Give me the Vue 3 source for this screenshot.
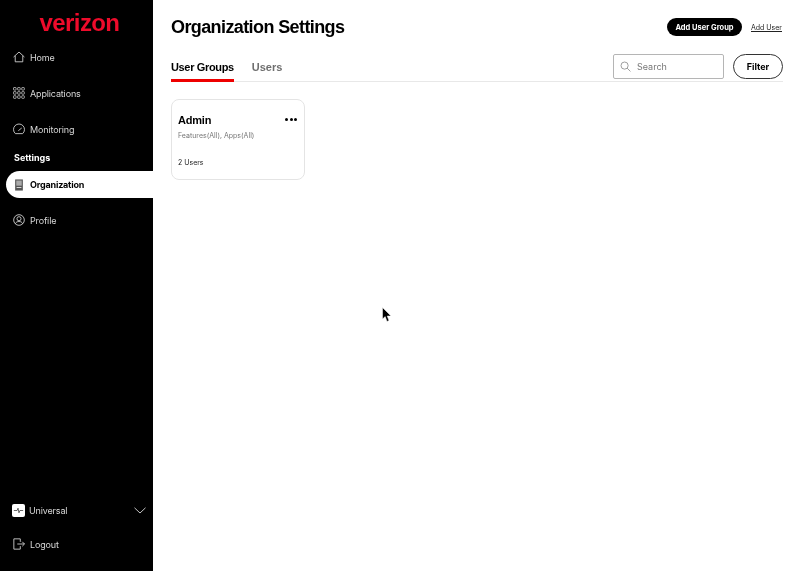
<script setup>
const topNav = [
  { label: 'Home', icon: 'home' },
  { label: 'Applications', icon: 'apps' },
  { label: 'Monitoring', icon: 'gauge' },
]
const dots = [0, 1, 2]
</script>

<template>
  <div class="page">
    <aside class="sidebar">
      <div class="logo">verizon</div>
      <nav class="nav">
        <a v-for="item in topNav" :key="item.label" class="nav-item">
          <svg class="icon" viewBox="0 0 14 14" fill="none" stroke="currentColor" stroke-width="1">
            <path v-if="item.icon === 'home'" d="M.7 7 7 1.2 13.3 7M2.6 5.6V12.6H11.4V5.6" />
            <g v-else-if="item.icon === 'apps'" stroke-width="0.85">
              <template v-for="r in dots" :key="r">
                <rect v-for="c in dots" :key="c" :x="0.6 + c * 4.8" :y="0.6 + r * 4.8" width="3" height="3" rx="0.6" />
              </template>
            </g>
            <g v-else>
              <path d="M2.8 12.4H11.2A6.4 6.4 0 1 0 2.8 12.4Z" stroke-linejoin="round" />
              <path d="M6.2 9 10.2 5.8" />
            </g>
          </svg>
          <span>{{ item.label }}</span>
        </a>
        <div class="section">Settings</div>
        <a class="nav-item active">
          <svg class="icon" viewBox="0 0 14 14">
            <path d="M2.5 .5H11.5V13.5H2.5Z" fill="#555" />
            <path d="M3.8 1.8H10.2V7.8H3.8Z" fill="#aaa" />
            <path d="M4.2 9.5H9.8V10.5H4.2Z" fill="#eee" />
          </svg>
          <span>Organization</span>
        </a>
        <a class="nav-item">
          <svg class="icon" viewBox="0 0 14 14" fill="none" stroke="currentColor" stroke-width="1">
            <circle cx="7" cy="7" r="6.2" />
            <circle cx="7" cy="5.5" r="2.4" />
            <path d="M2.8 11.4C3.4 9.4 5 8.8 7 8.8S10.6 9.4 11.2 11.4" />
          </svg>
          <span>Profile</span>
        </a>
      </nav>
      <div class="bottom">
        <a class="nav-item">
          <span class="tenant">
            <svg viewBox="0 0 14 14" fill="none" stroke="#333" stroke-width="0.8">
              <path d="M2 7H5.5L6.5 4.5 7.5 9.5 8.5 7H12" />
            </svg>
          </span>
          <span class="grow">Universal</span>
          <svg class="chev" viewBox="0 0 12 7" fill="none" stroke="currentColor" stroke-width="0.9">
            <path d="M.5.8 6 6 11.5.8" />
          </svg>
        </a>
        <a class="nav-item">
          <svg class="icon" viewBox="0 0 14 14" fill="none" stroke="currentColor" stroke-width="1">
            <path d="M8.5 4.5V1H1V13H8.5V9.5M5 7H13.4M10.8 4.4 13.4 7 10.8 9.6" />
          </svg>
          <span>Logout</span>
        </a>
      </div>
    </aside>

    <main class="main">
      <header class="head">
        <h1>Organization Settings</h1>
        <div class="actions">
          <button class="btn-primary">Add User Group</button>
          <a class="link">Add User</a>
        </div>
      </header>

      <div class="toolbar">
        <div class="tabs">
          <span class="tab on">User Groups</span>
          <span class="tab">Users</span>
        </div>
        <div class="tools">
          <div class="search">
            <svg viewBox="0 0 12 12" fill="none" stroke="#8a8a8a" stroke-width="0.9">
              <circle cx="5" cy="5" r="3.9" />
              <path d="M7.8 7.8 11.4 11.4" />
            </svg>
            <span>Search</span>
          </div>
          <button class="btn-outline">Filter</button>
        </div>
      </div>

      <section class="card">
        <div class="card-top">
          <h2>Admin</h2>
          <div class="more"><i v-for="d in dots" :key="d"></i></div>
        </div>
        <p class="sub">Features(All), Apps(All)</p>
        <p class="count">2 Users</p>
      </section>
    </main>

    <svg class="cursor" viewBox="0 0 10 16">
      <path d="M.5.5V12L3.2 9.6 5 14.5 7 13.6 5.2 9H9Z" fill="#000" stroke="#fff" stroke-width="0.5" />
    </svg>
  </div>
</template>

<style>
html, body { margin: 0; background: #fff; }
</style>

<style scoped>
.page {
  position: relative;
  display: flex;
  width: 800px;
  height: 571px;
  overflow: hidden;
  background: #fff;
  font-family: Inter, "Liberation Sans", sans-serif;
  color: #000;
}
.nav, .bottom, .head, .toolbar, .card {
  will-change: opacity;
}
.sidebar {
  display: flex;
  flex-direction: column;
  flex: 0 0 153px;
  background: #000;
  color: #d8d8d8;
}
.logo {
  height: 39px;
  padding-left: 6px;
  text-align: center;
  font-family: "Liberation Sans", sans-serif;
  font-size: 24px;
  line-height: 46px;
  font-weight: 700;
  letter-spacing: -0.6px;
  background: linear-gradient(90deg, #ee0b2b 6%, #f7941d 12%, #ee0b2b 17%);
  background-size: 153px 100%;
  -webkit-background-clip: text;
  background-clip: text;
  color: transparent;
}
.nav {
  display: flex;
  flex-direction: column;
  flex: 1;
}
.nav-item {
  display: flex;
  align-items: center;
  gap: 5px;
  height: 36px;
  padding-left: 13px;
  padding-right: 7px;
  font-size: 9px;
  letter-spacing: -0.15px;
}
.icon {
  flex: none;
  width: 12px;
  height: 12px;
}
.section {
  height: 20px;
  padding-left: 14px;
  font-size: 9px;
  line-height: 21px;
  font-weight: 700;
  color: #fff;
}
.active {
  height: 27px;
  margin: 4px 0 4px 6px;
  padding-left: 7px;
  border-radius: 14px 0 0 14px;
  background: #fff;
  color: #000;
  font-weight: 700;
  letter-spacing: -0.2px;
}
.bottom {
  display: flex;
  flex-direction: column;
  padding-bottom: 9px;
}
.bottom .nav-item:first-child { height: 32px; }
.tenant {
  display: flex;
  flex: none;
  width: 13px;
  height: 13px;
  margin: 0 -1px 0 -1px;
  border-radius: 2px;
  background: #fff;
}
.grow { flex: 1; }
.chev {
  width: 12px;
  height: 7px;
}
.main {
  flex: 1;
  padding: 0 17px 0 18px;
}
.head {
  display: flex;
  justify-content: space-between;
  align-items: center;
  height: 54px;
}
h1 {
  margin: 0;
  font-family: "Liberation Sans", sans-serif;
  font-size: 18px;
  font-weight: 700;
  letter-spacing: -0.6px;
}
.actions {
  display: flex;
  align-items: center;
  gap: 9px;
}
.btn-primary {
  width: 75px;
  height: 18px;
  padding: 0;
  border: 0;
  border-radius: 9px;
  background: #000;
  color: #fff;
  font: 700 7.5px Inter, "Liberation Sans", sans-serif;
}
.link {
  width: 32px;
  font-size: 7px;
  white-space: nowrap;
  text-decoration: underline;
  color: #222;
}
.toolbar {
  display: flex;
  justify-content: space-between;
  height: 27px;
  border-bottom: 1px solid #e8e8e8;
}
.tabs {
  display: flex;
  gap: 18px;
}
.tab {
  height: 25px;
  font-family: "Liberation Sans", sans-serif;
  font-size: 11px;
  line-height: 26px;
  font-weight: 700;
  color: #6f6f6f;
}
.tab.on {
  border-bottom: 3px solid #e00;
  color: #000;
  letter-spacing: -0.35px;
}
.tools {
  display: flex;
  gap: 9px;
}
.search {
  display: flex;
  align-items: center;
  gap: 6px;
  box-sizing: border-box;
  width: 111px;
  height: 25px;
  margin-left: 1px;
  padding-left: 6px;
  border: 1px solid #b5b5b5;
  border-radius: 2px;
  color: #777;
  font-size: 9px;
}
.search svg {
  width: 11px;
  height: 11px;
}
.btn-outline {
  box-sizing: border-box;
  width: 50px;
  height: 25px;
  padding: 0;
  border: 1px solid #333;
  border-radius: 13px;
  background: #fff;
  font: 700 9px Inter, "Liberation Sans", sans-serif;
}
.card {
  box-sizing: border-box;
  width: 134px;
  height: 81px;
  margin-top: 17px;
  padding: 14px 6px 0;
  border: 1px solid #e4e4e4;
  border-radius: 8px;
}
.card-top {
  display: flex;
  justify-content: space-between;
  align-items: center;
  height: 13px;
}
h2 {
  margin: 0 0 2px;
  font-family: "Liberation Sans", sans-serif;
  font-size: 11px;
  font-weight: 700;
  letter-spacing: -0.2px;
}
.more {
  display: flex;
  gap: 1.5px;
  margin: 0 1px 2px 0;
}
.more i {
  width: 3px;
  height: 3px;
  border-radius: 50%;
  background: #000;
}
.sub {
  margin: 3px 0 0;
  font-size: 7px;
  line-height: 12px;
  color: #777;
}
.count {
  margin: 15px 0 0;
  font-size: 7px;
  line-height: 12px;
  color: #222;
}
.cursor {
  position: absolute;
  left: 382px;
  top: 307px;
  width: 10px;
  height: 16px;
}
</style>
